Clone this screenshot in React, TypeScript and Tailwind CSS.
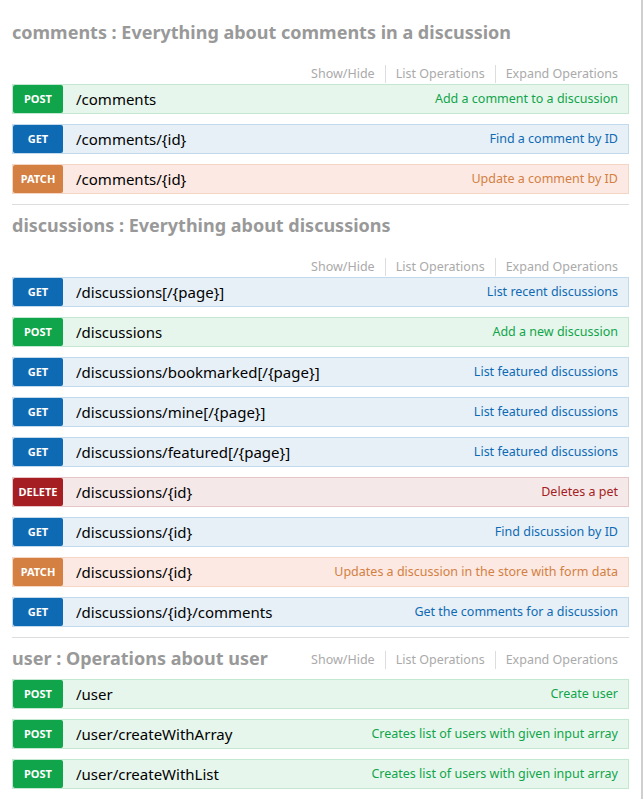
import React from 'react'

type Method = 'GET' | 'POST' | 'PATCH' | 'DELETE'

interface Operation {
  method: Method
  path: string
  summary: string
}

interface Resource {
  name: string
  description: string
  inlineOptions?: boolean
  operations: Operation[]
}

// swagger-ui's per-verb palette
const methodStyles: Record<Method, { badge: string; row: string; summary: string }> = {
  POST: { badge: 'bg-[#10a54a]', row: 'bg-[#e7f6ec] border-[#c3e8d1]', summary: 'text-[#10a54a]' },
  GET: { badge: 'bg-[#0f6ab4]', row: 'bg-[#e7f0f7] border-[#c3d9ec]', summary: 'text-[#0f6ab4]' },
  PATCH: { badge: 'bg-[#d38042]', row: 'bg-[#fce9e3] border-[#f5d5c3]', summary: 'text-[#d38042]' },
  DELETE: { badge: 'bg-[#a41e22]', row: 'bg-[#f5e8e8] border-[#e8c6c7]', summary: 'text-[#a41e22]' },
}

const resources: Resource[] = [
  {
    name: 'comments',
    description: 'Everything about comments in a discussion',
    operations: [
      { method: 'POST', path: '/comments', summary: 'Add a comment to a discussion' },
      { method: 'GET', path: '/comments/{id}', summary: 'Find a comment by ID' },
      { method: 'PATCH', path: '/comments/{id}', summary: 'Update a comment by ID' },
    ],
  },
  {
    name: 'discussions',
    description: 'Everything about discussions',
    operations: [
      { method: 'GET', path: '/discussions[/{page}]', summary: 'List recent discussions' },
      { method: 'POST', path: '/discussions', summary: 'Add a new discussion' },
      { method: 'GET', path: '/discussions/bookmarked[/{page}]', summary: 'List featured discussions' },
      { method: 'GET', path: '/discussions/mine[/{page}]', summary: 'List featured discussions' },
      { method: 'GET', path: '/discussions/featured[/{page}]', summary: 'List featured discussions' },
      { method: 'DELETE', path: '/discussions/{id}', summary: 'Deletes a pet' },
      { method: 'GET', path: '/discussions/{id}', summary: 'Find discussion by ID' },
      { method: 'PATCH', path: '/discussions/{id}', summary: 'Updates a discussion in the store with form data' },
      { method: 'GET', path: '/discussions/{id}/comments', summary: 'Get the comments for a discussion' },
    ],
  },
  {
    name: 'user',
    description: 'Operations about user',
    inlineOptions: true,
    operations: [
      { method: 'POST', path: '/user', summary: 'Create user' },
      { method: 'POST', path: '/user/createWithArray', summary: 'Creates list of users with given input array' },
      { method: 'POST', path: '/user/createWithList', summary: 'Creates list of users with given input array' },
    ],
  },
]

function Options() {
  return (
    <ul className="flex h-[20px] items-center whitespace-nowrap text-[12.5px] leading-[20px] text-[#aaa]">
      <li className="border-r border-[#ddd] pr-[10px] leading-[18px]">Show/Hide</li>
      <li className="border-r border-[#ddd] px-[10px] leading-[18px]">List Operations</li>
      <li className="pl-[10px] leading-[18px]">Expand Operations</li>
    </ul>
  )
}

function OperationRow({ op }: { op: Operation }) {
  const style = methodStyles[op.method]
  return (
    <div className={`mb-[10px] flex h-[30px] items-center border ${style.row}`}>
      <span
        className={`flex h-[28px] w-[50px] shrink-0 items-center justify-center rounded-[2px] text-[11px] font-bold text-white ${style.badge}`}
      >
        {op.method}
      </span>
      <span className="ml-[13px] whitespace-nowrap text-[15px] text-black">{op.path}</span>
      <span className={`ml-auto whitespace-nowrap pr-[10px] text-[12.5px] ${style.summary}`}>{op.summary}</span>
    </div>
  )
}

export default function App() {
  return (
    <div
      className="min-h-[799px] w-[643px] border-r-2 border-[#cfcfcf] bg-white pt-[12px]"
      style={{ fontFamily: '"Noto Sans", "Open Sans", sans-serif' }}
    >
      <div className="ml-[12px] w-[617px]">
        {resources.map((res, i) => (
          <section key={res.name} className={i > 0 ? 'border-t border-[#ddd] pt-[8px]' : 'pt-[8px]'}>
            {res.inlineOptions ? (
              <div className="mb-[9px] flex h-[24px] items-center justify-between pr-[11px]">
                <h2 className="whitespace-nowrap text-[18px] font-bold leading-[24px] text-[#999]">
                  {res.name} : {res.description}
                </h2>
                <div className="mt-[4px]">
                  <Options />
                </div>
              </div>
            ) : (
              <>
                <h2 className="whitespace-nowrap text-[18px] font-bold leading-[24px] text-[#999]">
                  {res.name} : {res.description}
                </h2>
                <div className="mt-[20px] flex justify-end pr-[11px]">
                  <Options />
                </div>
              </>
            )}
            {res.operations.map((op, j) => (
              <OperationRow key={j} op={op} />
            ))}
          </section>
        ))}
      </div>
    </div>
  )
}
